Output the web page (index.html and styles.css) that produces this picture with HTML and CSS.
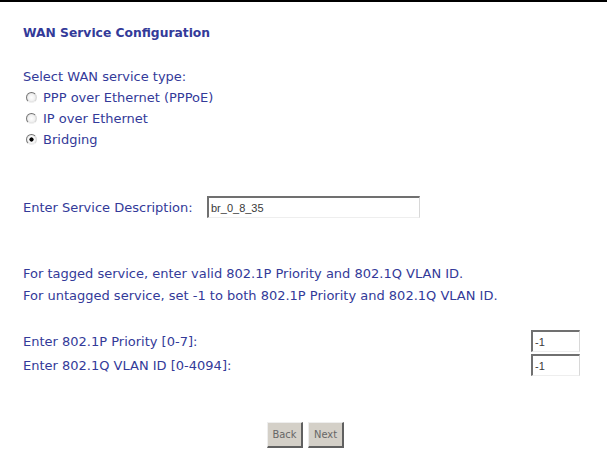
FILE: index.html
```html
<html>
  <head>
    <title>WAN Service Configuration</title>
    <link rel="stylesheet" href="styles.css">
  </head>
  <body>
    <div class="topline"></div>
    <form class="page">
      <div class="title">WAN Service Configuration</div>

      <div class="block-type">
        <div class="row">Select WAN service type:</div>
        <label class="radio"><input type="radio" name="ntwkPrtcl"> PPP over Ethernet (PPPoE)</label>
        <label class="radio"><input type="radio" name="ntwkPrtcl"> IP over Ethernet</label>
        <label class="radio"><input type="radio" name="ntwkPrtcl" checked> Bridging</label>
      </div>

      <div class="desc-row">
        <span class="desc-label">Enter Service Description:</span>
        <input type="text" class="txt desc" value="br_0_8_35">
      </div>

      <div class="notes">
        <div>For tagged service, enter valid 802.1P Priority and 802.1Q VLAN ID.</div>
        <div>For untagged service, set -1 to both 802.1P Priority and 802.1Q VLAN ID.</div>
      </div>

      <div class="vlan">
        <div class="vlan-row">
          <span>Enter 802.1P Priority [0-7]:</span>
          <input type="text" class="txt small" value="-1">
        </div>
        <div class="vlan-row">
          <span>Enter 802.1Q VLAN ID [0-4094]:</span>
          <input type="text" class="txt small" value="-1">
        </div>
      </div>

      <div class="buttons">
        <button type="button" class="btn">Back</button>
        <button type="button" class="btn">Next</button>
      </div>
    </form>
  </body>
</html>
```

FILE: styles.css
```css
body {
    margin: 0;
    background-color: white;
    font-family: "DejaVu Sans", sans-serif;
    font-size: 13px;
    color: #333a99;
}

.topline {
    height: 2px;
    background-color: black;
}

.page {
    margin: 0;
    padding: 0 0 0 23px;
    width: 557px;
}

.title {
    font-weight: bold;
    font-size: 12.3px;
    margin-top: 23px;
    height: 16px;
    line-height: 16px;
}

.block-type {
    margin-top: 25px;
}

.row {
    height: 21px;
    line-height: 21px;
}

.radio {
    display: flex;
    align-items: center;
    height: 21px;
    line-height: 21px;
}

.radio input {
    appearance: none;
    -webkit-appearance: none;
    margin: 0 6px 0 3px;
    width: 11px;
    height: 11px;
    border-radius: 50%;
    border: 1px solid;
    border-color: #707070 #d8d8d8 #f0f0f0 #7a7a7a;
    background: radial-gradient(circle, #ffffff 0, #f0f0f0 55%, #bdbdbd 100%);
    box-sizing: border-box;
}

.radio input:checked {
    background: radial-gradient(circle, #000000 0, #000000 28%, #ffffff 38%, #ececec 65%, #bdbdbd 100%);
}

.desc-row {
    display: flex;
    align-items: center;
    margin-top: 46px;
    height: 22px;
}

.desc-label {
    width: 184px;
}

.txt {
    font-family: "Liberation Sans", sans-serif;
    font-size: 11px;
    line-height: 18px;
    color: #3a3a3a;
    border-top: 2px solid #707070;
    border-left: 2px solid #707070;
    border-right: 1px solid #d8d8d8;
    border-bottom: 1px solid #eeeeee;
    padding: 0 2px;
    height: 22px;
    box-sizing: border-box;
    outline: none;
}

.desc {
    width: 213px;
}

.notes {
    margin-top: 45px;
    line-height: 22px;
}

.vlan {
    margin-top: 22px;
}

.vlan-row {
    display: flex;
    justify-content: space-between;
    align-items: center;
    height: 24px;
}

.small {
    width: 49px;
}

.buttons {
    display: flex;
    justify-content: center;
    gap: 5px;
    margin-top: 45px;
    padding-left: 8px;
}

.btn {
    font-family: "DejaVu Sans Condensed", sans-serif;
    font-size: 11px;
    color: #666;
    background-color: #d4d0c8;
    border-top: 1px solid #eeeeee;
    border-left: 1px solid #eeeeee;
    border-right: 2px solid #606060;
    border-bottom: 2px solid #606060;
    padding: 0;
    width: 36px;
    height: 26px;
}
```
